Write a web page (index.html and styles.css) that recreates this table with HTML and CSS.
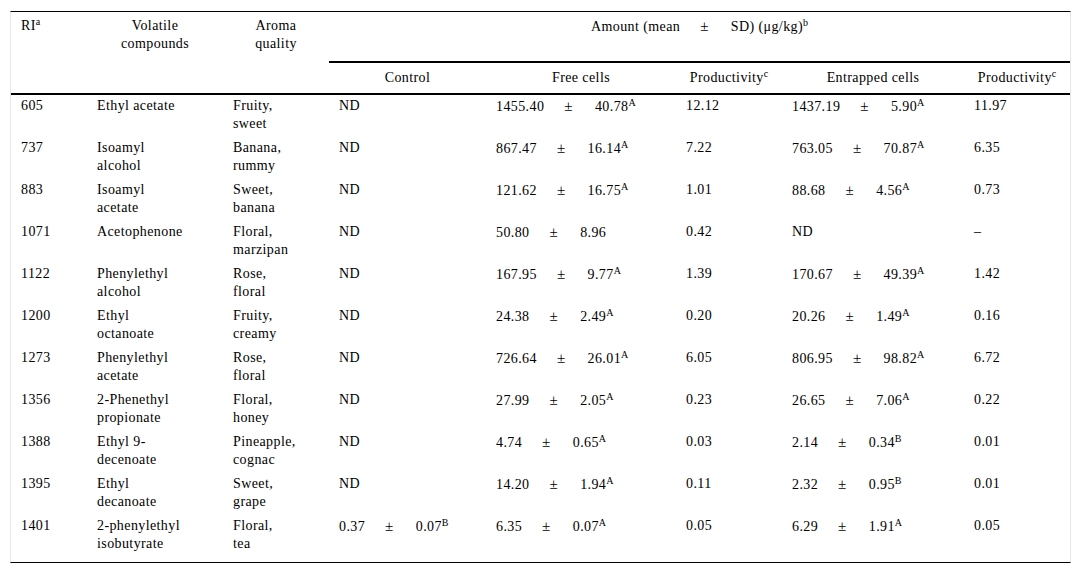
FILE: index.html
```html
<!DOCTYPE html>
<html>
<head>
<meta charset="utf-8">
<link rel="stylesheet" href="styles.css">
</head>
<body>
<div class="table-wrap">
<table class="data">
<colgroup>
<col class="c-ri"><col class="c-vol"><col class="c-aroma"><col class="c-ctrl"><col class="c-free"><col class="c-prod"><col class="c-ent"><col class="c-prod2">
</colgroup>
<thead>
<tr>
<th class="h-top h-left" rowspan="2">RI<sup>a</sup></th>
<th class="h-top" rowspan="2">Volatile<br>compounds</th>
<th class="h-top" rowspan="2">Aroma<br>quality</th>
<th class="h-amount" colspan="5">Amount (mean<span class="pm">±</span>SD) (μg/kg)<sup>b</sup></th>
</tr>
<tr>
<th class="h-sub">Control</th>
<th class="h-sub">Free cells</th>
<th class="h-sub">Productivity<sup>c</sup></th>
<th class="h-sub">Entrapped cells</th>
<th class="h-sub">Productivity<sup>c</sup></th>
</tr>
</thead>
<tbody>
<tr><td>605</td><td>Ethyl acetate</td><td>Fruity,<br>sweet</td><td>ND</td><td>1455.40<span class="pm">±</span>40.78<sup>A</sup></td><td>12.12</td><td>1437.19<span class="pm">±</span>5.90<sup>A</sup></td><td>11.97</td></tr>
<tr><td>737</td><td>Isoamyl<br>alcohol</td><td>Banana,<br>rummy</td><td>ND</td><td>867.47<span class="pm">±</span>16.14<sup>A</sup></td><td>7.22</td><td>763.05<span class="pm">±</span>70.87<sup>A</sup></td><td>6.35</td></tr>
<tr><td>883</td><td>Isoamyl<br>acetate</td><td>Sweet,<br>banana</td><td>ND</td><td>121.62<span class="pm">±</span>16.75<sup>A</sup></td><td>1.01</td><td>88.68<span class="pm">±</span>4.56<sup>A</sup></td><td>0.73</td></tr>
<tr><td>1071</td><td>Acetophenone</td><td>Floral,<br>marzipan</td><td>ND</td><td>50.80<span class="pm">±</span>8.96</td><td>0.42</td><td>ND</td><td>–</td></tr>
<tr><td>1122</td><td>Phenylethyl<br>alcohol</td><td>Rose,<br>floral</td><td>ND</td><td>167.95<span class="pm">±</span>9.77<sup>A</sup></td><td>1.39</td><td>170.67<span class="pm">±</span>49.39<sup>A</sup></td><td>1.42</td></tr>
<tr><td>1200</td><td>Ethyl<br>octanoate</td><td>Fruity,<br>creamy</td><td>ND</td><td>24.38<span class="pm">±</span>2.49<sup>A</sup></td><td>0.20</td><td>20.26<span class="pm">±</span>1.49<sup>A</sup></td><td>0.16</td></tr>
<tr><td>1273</td><td>Phenylethyl<br>acetate</td><td>Rose,<br>floral</td><td>ND</td><td>726.64<span class="pm">±</span>26.01<sup>A</sup></td><td>6.05</td><td>806.95<span class="pm">±</span>98.82<sup>A</sup></td><td>6.72</td></tr>
<tr><td>1356</td><td>2-Phenethyl<br>propionate</td><td>Floral,<br>honey</td><td>ND</td><td>27.99<span class="pm">±</span>2.05<sup>A</sup></td><td>0.23</td><td>26.65<span class="pm">±</span>7.06<sup>A</sup></td><td>0.22</td></tr>
<tr><td>1388</td><td>Ethyl 9-<br>decenoate</td><td>Pineapple,<br>cognac</td><td>ND</td><td>4.74<span class="pm">±</span>0.65<sup>A</sup></td><td>0.03</td><td>2.14<span class="pm">±</span>0.34<sup>B</sup></td><td>0.01</td></tr>
<tr><td>1395</td><td>Ethyl<br>decanoate</td><td>Sweet,<br>grape</td><td>ND</td><td>14.20<span class="pm">±</span>1.94<sup>A</sup></td><td>0.11</td><td>2.32<span class="pm">±</span>0.95<sup>B</sup></td><td>0.01</td></tr>
<tr><td>1401</td><td>2-phenylethyl<br>isobutyrate</td><td>Floral,<br>tea</td><td>0.37<span class="pm">±</span>0.07<sup>B</sup></td><td>6.35<span class="pm">±</span>0.07<sup>A</sup></td><td>0.05</td><td>6.29<span class="pm">±</span>1.91<sup>A</sup></td><td>0.05</td></tr>
</tbody>
</table>
</div>
</body>
</html>
```

FILE: styles.css
```css
html, body {
  margin: 0;
  padding: 0;
  background: #ffffff;
}

body {
  font-family: "Liberation Serif", "Times New Roman", serif;
  font-size: 14px;
  line-height: 18px;
  color: #000000;
  letter-spacing: 0.4px;
}

.table-wrap {
  margin: 11px 0 0 10px;
  width: 1059px;
  border-left: 1px solid #e6e6e6;
  border-right: 1px solid #e6e6e6;
  border-top: 1px solid #000000;
  border-bottom: 1px solid #000000;
  padding-bottom: 5px;
}

.data {
  width: 1059px;
  table-layout: fixed;
  border-collapse: separate;
  border-spacing: 0;
}

.c-ri { width: 76px; }
.c-vol { width: 136px; }
.c-aroma { width: 106px; }
.c-ctrl { width: 157px; }
.c-free { width: 190px; }
.c-prod { width: 106px; }
.c-ent { width: 182px; }
.c-prod2 { width: 106px; }

.data th {
  font-weight: normal;
  text-align: center;
  vertical-align: top;
  padding: 0 10px;
}

.data th.h-top {
  padding-top: 5px;
  border-bottom: 2px solid #000000;
}

.data th.h-left {
  text-align: left;
}

.data th.h-amount {
  padding: 5px 10px 25px;
  border-bottom: 2px solid #000000;
}

.data th.h-sub {
  padding: 6px 10px;
  border-bottom: 2px solid #000000;
}

.data td {
  vertical-align: top;
  text-align: left;
  padding: 2px 10px 4px;
  white-space: nowrap;
}

.pm {
  display: inline-block;
  margin: 0 22px 0 20px;
  font-size: 15px;
}

sup {
  font-size: 10px;
  line-height: 0;
  vertical-align: 5px;
  letter-spacing: 0;
}
```
